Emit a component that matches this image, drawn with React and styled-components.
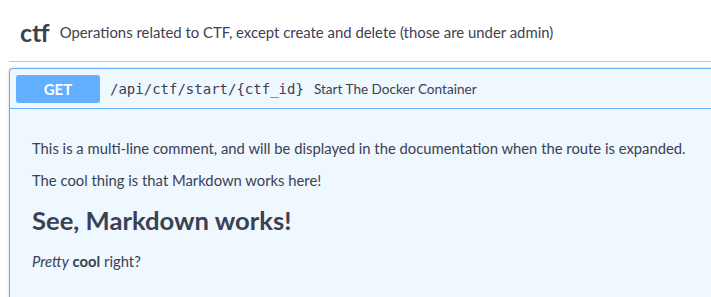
import React from 'react';
import styled, { createGlobalStyle } from 'styled-components';

const GlobalStyle = createGlobalStyle`
  html, body {
    margin: 0;
    padding: 0;
    background: #ffffff;
    overflow: hidden;
  }
  body {
    font-family: Lato, "Open Sans", sans-serif;
    color: #3b4151;
  }
`;

const Page = styled.div`
  width: 760px;
  padding-left: 9px;
`;

const TagHeader = styled.div`
  height: 61px;
  display: flex;
  align-items: center;
  padding-left: 11px;
  border-bottom: 1px solid #c6c7cb;
  margin-bottom: 6px;
`;

const TagName = styled.span`
  font-size: 25px;
  font-weight: 700;
  margin-right: 10px;
  margin-top: 2px;
`;

const TagDesc = styled.span`
  font-size: 14.9px;
  margin-top: 2px;
`;

const OpBlock = styled.div`
  border: 1px solid #61affe;
  border-right: none;
  border-bottom: none;
  border-radius: 4px 0 0 0;
  background: #eff7ff;
  box-shadow: 0 0 3px rgba(0, 0, 0, 0.19);
`;

const Summary = styled.div`
  display: flex;
  align-items: center;
  height: 40px;
  padding-left: 6px;
  border-bottom: 1px solid #61affe;
  box-sizing: border-box;
`;

const Method = styled.span`
  width: 84px;
  height: 28px;
  border-radius: 3px;
  background: #61affe;
  color: #ffffff;
  font-size: 15px;
  font-weight: 700;
  display: flex;
  align-items: center;
  justify-content: center;
`;

const Path = styled.span`
  font-family: "DejaVu Sans Mono", monospace;
  font-size: 14px;
  color: #3b4151;
  padding: 0 10px 0 10px;
`;

const SummaryDesc = styled.span`
  font-size: 13.6px;
  color: #3b4151;
`;

const Body = styled.div`
  padding: 29px 20px 30px 22px;
  height: 220px;
  box-sizing: border-box;
`;

const Para = styled.p`
  margin: 0 0 12px;
  font-size: 14.8px;
  line-height: 20px;
`;

const Heading = styled.h1`
  margin: 15px 0 16px;
  font-size: 25.6px;
  line-height: 30px;
  font-weight: 700;
`;

export default function App() {
  return (
    <>
      <GlobalStyle />
      <Page>
        <TagHeader>
          <TagName>ctf</TagName>
          <TagDesc>Operations related to CTF, except create and delete (those are under admin)</TagDesc>
        </TagHeader>
        <OpBlock>
          <Summary>
            <Method>GET</Method>
            <Path>/api/ctf/start/{'{ctf_id}'}</Path>
            <SummaryDesc>Start The Docker Container</SummaryDesc>
          </Summary>
          <Body>
            <Para>This is a multi-line comment, and will be displayed in the documentation when the route is expanded.</Para>
            <Para>The cool thing is that Markdown works here!</Para>
            <Heading>See, Markdown works!</Heading>
            <Para><em>Pretty</em> <strong>cool</strong> right?</Para>
          </Body>
        </OpBlock>
      </Page>
    </>
  );
}
